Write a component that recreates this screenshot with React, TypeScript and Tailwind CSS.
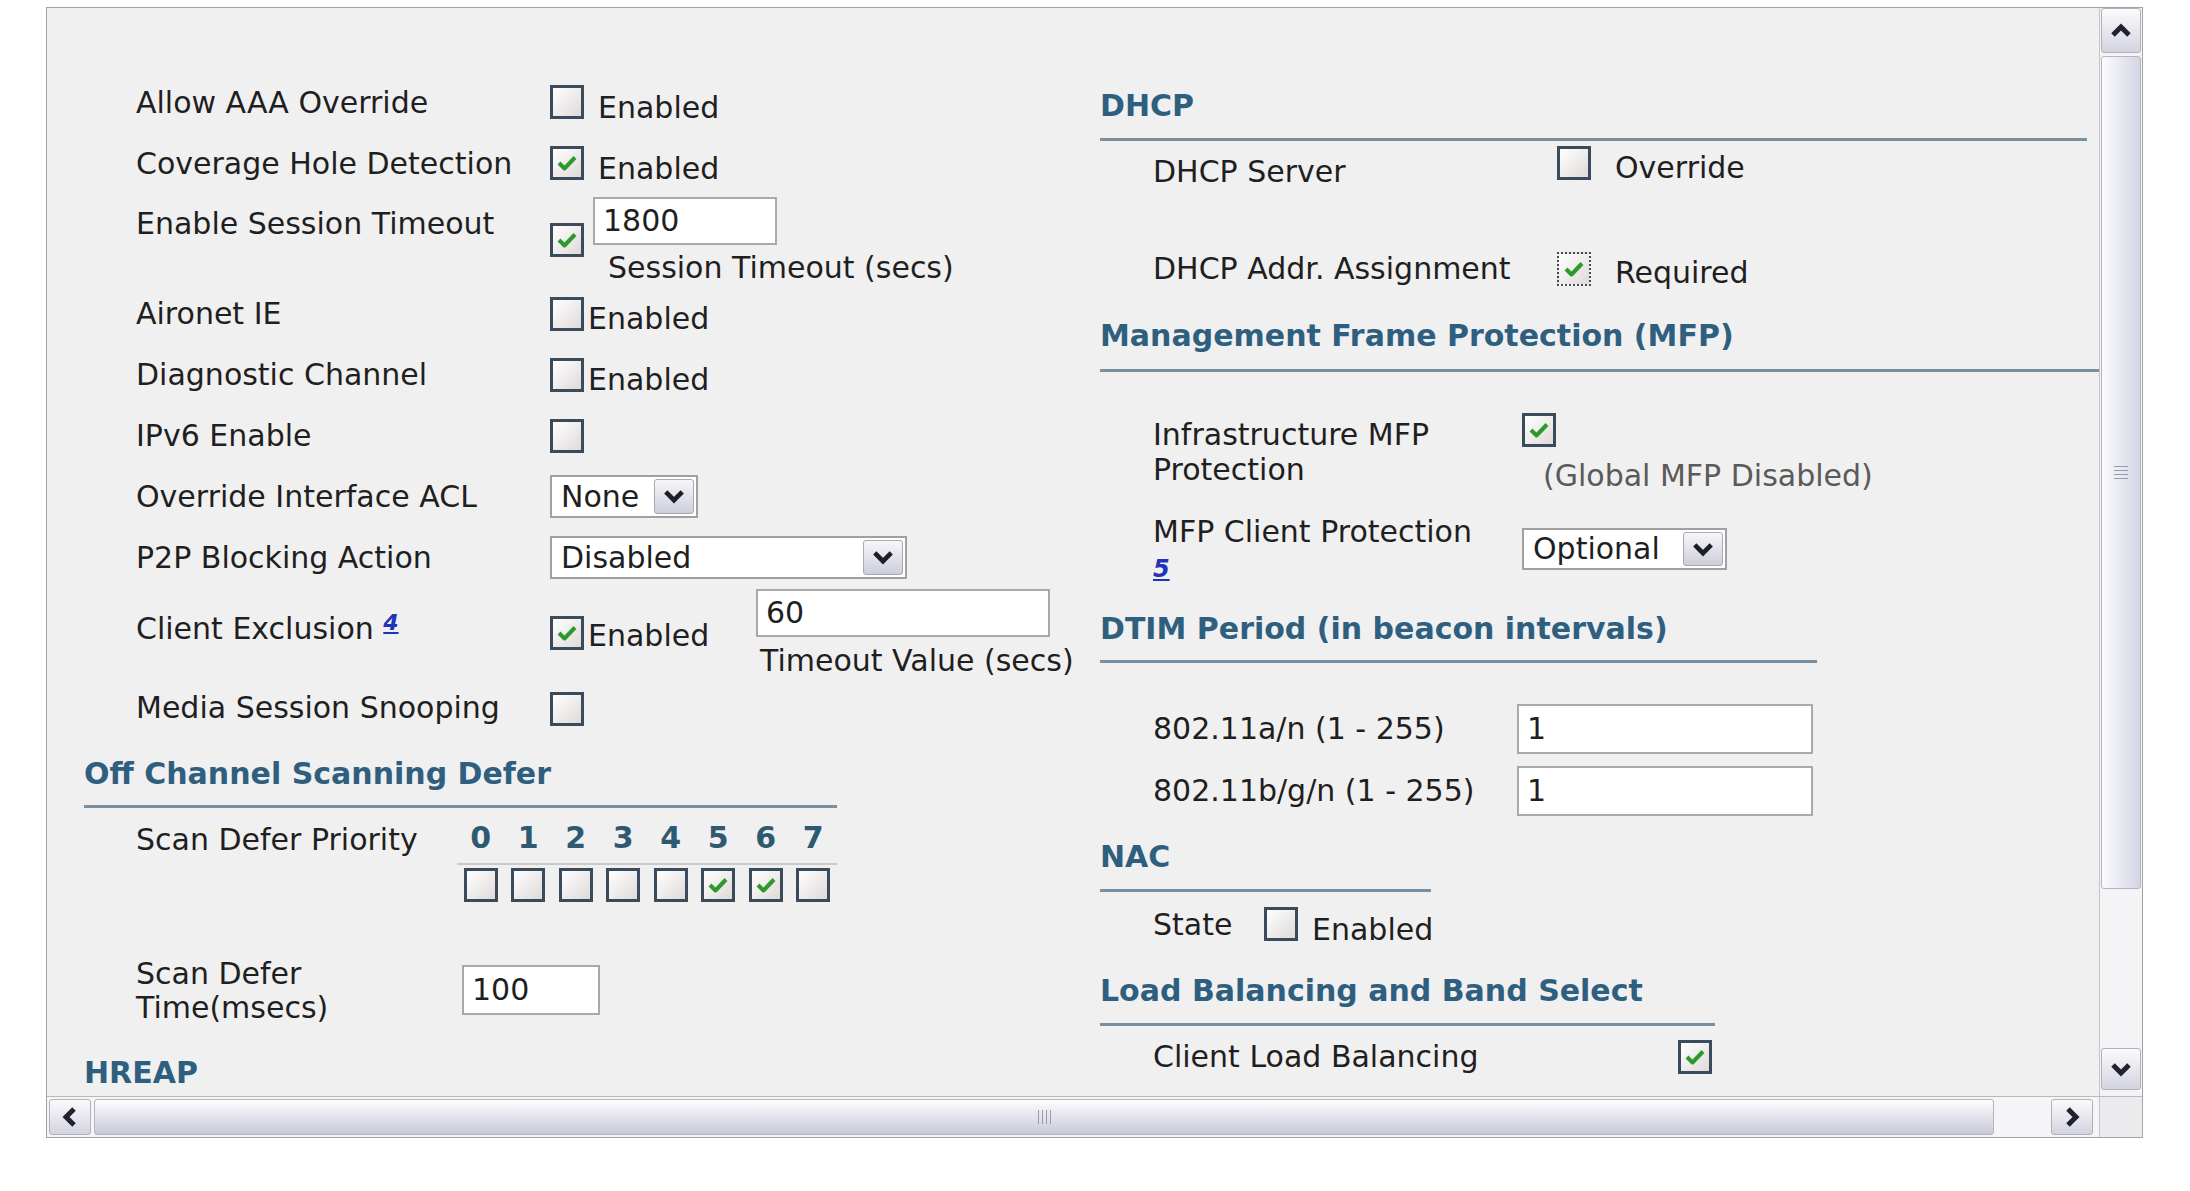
import clsx from "clsx";

const heading = "font-bold text-[#2f5f7f]";

function Check() {
  return (
    <svg viewBox="0 0 22 18" className="h-[18px] w-[22px]">
      <path d="M3 9l5.5 5.5L19 3.5" fill="none" stroke="#2c9a2c" strokeWidth="4" strokeLinejoin="round" />
    </svg>
  );
}

function Box({ on, dotted, className }: { on?: boolean; dotted?: boolean; className?: string }) {
  return (
    <span
      className={clsx(
        "flex h-[34px] w-[34px] shrink-0 items-center justify-center bg-gradient-to-br from-white to-[#e0dada]",
        dotted ? "border-2 border-dotted border-[#4a4a4a]" : "border-[3px] border-[#3a4c5b]",
        className
      )}
    >
      {on && <Check />}
    </span>
  );
}

function Select({ value, className }: { value: string; className?: string }) {
  return (
    <div className={clsx("flex shrink-0 items-stretch border-2 border-[#a0a0a0] bg-white", className)}>
      <span className="flex-1 self-center pl-[9px]">{value}</span>
      <span className="m-[2px] flex w-[40px] items-center justify-center rounded-[3px] border border-[#a7a8b6] bg-gradient-to-b from-[#f7f7fa] to-[#cdcedb]">
        <svg viewBox="0 0 24 16" className="h-[15px] w-[22px]">
          <path d="M3 3l9 9 9-9" fill="none" stroke="#1e1e26" strokeWidth="5" />
        </svg>
      </span>
    </div>
  );
}

function Field({ value, className }: { value: string; className?: string }) {
  return (
    <div className={clsx("flex shrink-0 items-center border-2 border-[#a9a9a9] bg-white pl-[8px]", className)}>
      {value}
    </div>
  );
}

function Arrow({ dir }: { dir: "up" | "down" | "left" | "right" }) {
  const d = {
    up: "M4 16l8-8 8 8",
    down: "M4 8l8 8 8-8",
    left: "M16 4l-8 8 8 8",
    right: "M8 4l8 8-8 8",
  }[dir];
  return (
    <svg viewBox="0 0 24 24" className="h-[24px] w-[24px]">
      <path d={d} fill="none" stroke="#22222e" strokeWidth="5" />
    </svg>
  );
}

function SBtn({ dir, className }: { dir: "up" | "down" | "left" | "right"; className?: string }) {
  return (
    <div
      className={clsx(
        "flex shrink-0 items-center justify-center rounded-[3px] border border-[#b1b1bd] bg-gradient-to-b from-[#fbfbfd] to-[#d3d4e0]",
        className
      )}
    >
      <Arrow dir={dir} />
    </div>
  );
}

function Heading({ children, className }: { children: React.ReactNode; className?: string }) {
  return <div className={clsx("border-b-[3px] border-[#7890a0]", heading, className)}>{children}</div>;
}

export default function App() {
  return (
    <div className="min-h-screen bg-white font-['DejaVu_Sans',Verdana,sans-serif] text-[30px] leading-[36px] text-[#1f1f1f]">
      <div className="ml-[46px] pt-[7px]">
        <div className="flex h-[1131px] w-[2097px] flex-col border border-[#a3a3a3] bg-[#f1f0f1]">
          <div className="flex min-h-0 flex-1">
            <div className="flex min-w-0 flex-1 overflow-hidden">
              {/* left column */}
              <div className="flex w-[1053px] shrink-0 flex-col pt-[77px]">
                <div className="flex h-[61px] shrink-0 pl-[89px]">
                  <span className="w-[414px]">Allow AAA Override</span>
                  <Box />
                  <span className="ml-[14px] pt-[5px]">Enabled</span>
                </div>
                <div className="flex h-[51px] shrink-0 pl-[89px]">
                  <span className="w-[414px]">Coverage Hole Detection</span>
                  <Box on />
                  <span className="ml-[14px] pt-[5px]">Enabled</span>
                </div>
                <div className="flex h-[99px] shrink-0 items-start pl-[89px]">
                  <span className="mt-[9px] w-[414px]">Enable Session Timeout</span>
                  <Box on className="mt-[26px]" />
                  <div className="ml-[9px] flex flex-col">
                    <Field value="1800" className="h-[48px] w-[184px]" />
                    <span className="ml-[15px] mt-[5px]">Session Timeout (secs)</span>
                  </div>
                </div>
                <div className="flex h-[61px] shrink-0 items-start pl-[89px]">
                  <span className="w-[414px]">Aironet IE</span>
                  <Box className="mt-[1px]" />
                  <span className="ml-[4px] pt-[5px]">Enabled</span>
                </div>
                <div className="flex h-[61px] shrink-0 items-start pl-[89px]">
                  <span className="w-[414px]">Diagnostic Channel</span>
                  <Box className="mt-[1px]" />
                  <span className="ml-[4px] pt-[5px]">Enabled</span>
                </div>
                <div className="flex h-[57px] shrink-0 items-start pl-[89px]">
                  <span className="w-[414px]">IPv6 Enable</span>
                  <Box className="mt-[1px]" />
                </div>
                <div className="flex h-[61px] shrink-0 items-start pl-[89px]">
                  <span className="mt-[4px] w-[414px]">Override Interface ACL</span>
                  <Select value="None" className="h-[43px] w-[148px]" />
                </div>
                <div className="flex h-[53px] shrink-0 items-start pl-[89px]">
                  <span className="mt-[4px] w-[414px]">P2P Blocking Action</span>
                  <Select value="Disabled" className="h-[43px] w-[357px]" />
                </div>
                <div className="flex h-[101px] shrink-0 items-start pl-[89px]">
                  <span className="mt-[22px] w-[414px]">
                    Client Exclusion{" "}
                    <a className="relative -top-[9px] text-[22px] font-bold italic text-[#2233bb] underline">4</a>
                  </span>
                  <div className="flex w-[206px] shrink-0 items-start">
                    <Box on className="mt-[27px]" />
                    <span className="ml-[4px] mt-[29px]">Enabled</span>
                  </div>
                  <div className="flex flex-col">
                    <Field value="60" className="h-[48px] w-[294px]" />
                    <span className="ml-[4px] mt-[6px]">Timeout Value (secs)</span>
                  </div>
                </div>
                <div className="flex h-[66px] shrink-0 items-start pl-[89px]">
                  <span className="w-[414px]">Media Session Snooping</span>
                  <Box className="mt-[2px]" />
                </div>

                <div className="shrink-0 pl-[37px]">
                  <Heading className="w-[753px] pb-[13px]">Off Channel Scanning Defer</Heading>
                </div>
                <div className="mt-[12px] flex shrink-0 items-start pl-[89px]">
                  <span className="mt-[2px] w-[321px]">Scan Defer Priority</span>
                  <div className="w-[380px]">
                    <div className="grid grid-cols-8 text-center font-bold text-[#2d5a70]">
                      {[0, 1, 2, 3, 4, 5, 6, 7].map((n) => (
                        <span key={n}>{n}</span>
                      ))}
                    </div>
                    <div className="mt-[7px] grid grid-cols-8 justify-items-center border-t-2 border-[#cacaca] pt-[3px]">
                      {[0, 1, 2, 3, 4, 5, 6, 7].map((n) => (
                        <Box key={n} on={n === 5 || n === 6} />
                      ))}
                    </div>
                  </div>
                </div>
                <div className="mt-[55px] flex shrink-0 items-start pl-[89px]">
                  <span className="w-[326px] leading-[34px]">
                    Scan Defer
                    <br />
                    Time(msecs)
                  </span>
                  <Field value="100" className="mt-[8px] h-[50px] w-[138px]" />
                </div>
                <div className={clsx("mt-[30px] shrink-0 pl-[37px]", heading)}>HREAP</div>
              </div>

              {/* right column */}
              <div className="flex min-w-0 flex-1 flex-col pt-[80px]">
                <Heading className="w-[987px] pb-[14px]">DHCP</Heading>
                <div className="mt-[5px] flex h-[105px] shrink-0 items-start pl-[53px]">
                  <span className="mt-[8px] w-[404px]">DHCP Server</span>
                  <Box />
                  <span className="ml-[24px] mt-[4px]">Override</span>
                </div>
                <div className="flex h-[67px] shrink-0 items-start pl-[53px]">
                  <span className="w-[404px]">DHCP Addr. Assignment</span>
                  <Box on dotted className="mt-[1px]" />
                  <span className="ml-[24px] mt-[4px]">Required</span>
                </div>
                <Heading className="w-[999px] pb-[15px]">Management Frame Protection (MFP)</Heading>
                <div className="mt-[41px] flex h-[101px] shrink-0 items-start pl-[53px]">
                  <span className="mt-[4px] w-[369px] leading-[35px]">
                    Infrastructure MFP
                    <br />
                    Protection
                  </span>
                  <div className="flex flex-col">
                    <Box on />
                    <span className="ml-[21px] mt-[11px] text-[#5a5a5a]">(Global MFP Disabled)</span>
                  </div>
                </div>
                <div className="flex h-[97px] shrink-0 items-start pl-[53px]">
                  <div className="w-[369px] leading-[35px]">
                    MFP Client Protection
                    <br />
                    <a className="text-[24px] font-bold italic text-[#2233bb] underline">5</a>
                  </div>
                  <Select value="Optional" className="mt-[14px] h-[42px] w-[205px]" />
                </div>
                <Heading className="w-[717px] pb-[13px]">DTIM Period (in beacon intervals)</Heading>
                <div className="mt-[41px] flex h-[62px] shrink-0 items-start pl-[53px]">
                  <span className="mt-[7px] w-[364px]">802.11a/n (1 - 255)</span>
                  <Field value="1" className="h-[50px] w-[296px]" />
                </div>
                <div className="flex h-[50px] shrink-0 items-start pl-[53px]">
                  <span className="mt-[7px] w-[364px]">802.11b/g/n (1 - 255)</span>
                  <Field value="1" className="h-[50px] w-[296px]" />
                </div>
                <Heading className="mt-[23px] w-[331px] pb-[14px]">NAC</Heading>
                <div className="mt-[15px] flex h-[36px] shrink-0 items-start pl-[53px]">
                  <span className="w-[111px]">State</span>
                  <Box />
                  <span className="ml-[14px] mt-[5px]">Enabled</span>
                </div>
                <Heading className="mt-[30px] w-[615px] pb-[14px]">Load Balancing and Band Select</Heading>
                <div className="mt-[13px] flex shrink-0 items-start pl-[53px]">
                  <span className="w-[525px]">Client Load Balancing</span>
                  <Box on className="mt-[1px]" />
                </div>
              </div>
            </div>

            {/* vertical scrollbar */}
            <div className="flex w-[43px] shrink-0 flex-col border-l border-[#c4c4c8] bg-[#f4f4f6] px-[1px]">
              <SBtn dir="up" className="h-[45px]" />
              <div className="mt-[3px] flex h-[833px] flex-col items-center justify-center gap-[3px] rounded-[3px] border border-[#b4b4c4] bg-gradient-to-r from-[#fbfbfd] to-[#d4d5e5]">
                {[0, 1, 2, 3].map((i) => (
                  <span key={i} className="h-[1px] w-[14px] bg-[#9a9aac]" />
                ))}
              </div>
              <div className="flex-1" />
              <SBtn dir="down" className="mb-[6px] h-[42px]" />
            </div>
          </div>

          {/* horizontal scrollbar */}
          <div className="flex h-[41px] shrink-0 border-t border-[#b9b9b9]">
            <div className="flex flex-1 items-stretch bg-[#f5f5f7] py-[2px] pl-[2px]">
              <SBtn dir="left" className="w-[42px]" />
              <div className="ml-[3px] flex w-[1900px] items-center justify-center gap-[3px] rounded-[3px] border border-[#b4b4c4] bg-gradient-to-b from-[#fdfdfe] to-[#c9cad9]">
                {[0, 1, 2, 3].map((i) => (
                  <span key={i} className="h-[14px] w-[1px] bg-[#9a9aac]" />
                ))}
              </div>
              <div className="flex-1" />
              <SBtn dir="right" className="mr-[6px] w-[42px]" />
            </div>
            <div className="w-[43px] border-l border-[#c4c4c8] bg-[#ebebee]" />
          </div>
        </div>
      </div>
    </div>
  );
}
